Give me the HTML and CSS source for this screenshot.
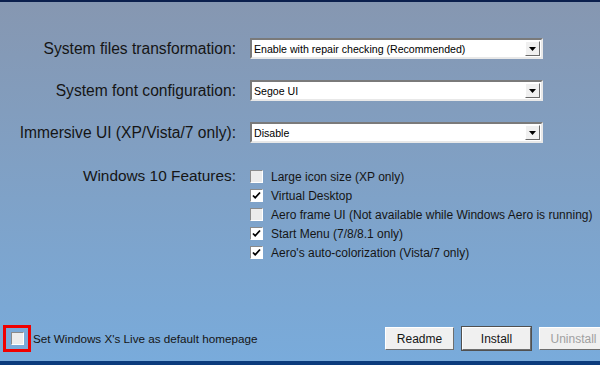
FILE: index.html
```html
<html>
    <head>
        <title>Setup options</title>
        <link rel="stylesheet" href="styles.css">
    </head>
    <body>
        <div class="page">
            <div class="options">
                <div class="row">
                    <span class="label">System files transformation:</span>
                    <div class="combo">
                        <span class="value">Enable with repair checking (Recommended)</span>
                        <span class="drop"><svg width="7" height="4" viewBox="0 0 7 4"><path d="M0 0H7L3.5 4Z" fill="#000"/></svg></span>
                    </div>
                </div>
                <div class="row">
                    <span class="label">System font configuration:</span>
                    <div class="combo">
                        <span class="value">Segoe UI</span>
                        <span class="drop"><svg width="7" height="4" viewBox="0 0 7 4"><path d="M0 0H7L3.5 4Z" fill="#000"/></svg></span>
                    </div>
                </div>
                <div class="row">
                    <span class="label">Immersive UI (XP/Vista/7 only):</span>
                    <div class="combo">
                        <span class="value">Disable</span>
                        <span class="drop"><svg width="7" height="4" viewBox="0 0 7 4"><path d="M0 0H7L3.5 4Z" fill="#000"/></svg></span>
                    </div>
                </div>
                <div class="row features">
                    <span class="label small">Windows 10 Features:</span>
                    <div class="checks">
                        <div class="check"><span class="box"></span>Large icon size (XP only)</div>
                        <div class="check"><span class="box on"><svg width="9" height="9" viewBox="0 0 9 9"><path d="M1 4.5L3.2 6.8L8 1.5" fill="none" stroke="#000" stroke-width="1.8"/></svg></span>Virtual Desktop</div>
                        <div class="check"><span class="box"></span>Aero frame UI (Not available while Windows Aero is running)</div>
                        <div class="check"><span class="box on"><svg width="9" height="9" viewBox="0 0 9 9"><path d="M1 4.5L3.2 6.8L8 1.5" fill="none" stroke="#000" stroke-width="1.8"/></svg></span>Start Menu (7/8/8.1 only)</div>
                        <div class="check"><span class="box on"><svg width="9" height="9" viewBox="0 0 9 9"><path d="M1 4.5L3.2 6.8L8 1.5" fill="none" stroke="#000" stroke-width="1.8"/></svg></span>Aero's auto-colorization (Vista/7 only)</div>
                    </div>
                </div>
            </div>
            <div class="footer">
                <div class="homepage">
                    <span class="focus"><span class="box"></span></span>
                    Set Windows X's Live as default homepage
                </div>
                <div class="buttons">
                    <span class="btn">Readme</span>
                    <span class="btn default">Install</span>
                    <span class="btn disabled">Uninstall</span>
                </div>
            </div>
        </div>
    </body>
</html>
```

FILE: styles.css
```css
body {
    margin: 0;
    width: 600px;
    height: 365px;
    overflow: hidden;
    font-family: 'Liberation Sans', Arial, sans-serif;
    color: #151515;
}
.page {
    height: 359px;
    border-top: 2px solid #0b1f4d;
    border-bottom: 4px solid #0b3b7c;
    background: linear-gradient(#8697b1, #79abdb);
    display: flex;
    flex-direction: column;
}
.options {
    padding-top: 36px;
    display: flex;
    flex-direction: column;
    gap: 21px;
}
.row {
    display: flex;
    align-items: center;
    gap: 14px;
}
.label {
    width: 236px;
    text-align: right;
    font-size: 15.6px;
    white-space: nowrap;
}
.label.small {
    font-size: 15.4px;
}
.combo {
    width: 289px;
    height: 17px;
    background: #fff;
    border: 2px solid;
    border-color: #7a7a7a #e8e8e8 #e8e8e8 #7a7a7a;
    display: flex;
    align-items: center;
    justify-content: space-between;
    font-size: 10.6px;
    color: #000;
}
.value {
    padding-left: 2px;
}
.drop {
    width: 13px;
    height: 13px;
    margin-right: 1px;
    background: #f0f0f0;
    border: 1px solid;
    border-color: #fff #6a6a6a #6a6a6a #fff;
    display: flex;
    align-items: center;
    justify-content: center;
}
.features {
    align-items: flex-start;
    margin-top: 2px;
}
.features .label {
    padding-top: 1px;
}
.checks {
    display: flex;
    flex-direction: column;
    gap: 4px;
    padding-top: 3px;
}
.check {
    display: flex;
    align-items: center;
    gap: 8px;
    font-size: 12px;
    height: 15px;
    white-space: nowrap;
}
.box {
    width: 11px;
    height: 11px;
    background: #ececec;
    border: 1px solid;
    border-color: #8a8a8a #fff #fff #8a8a8a;
    display: flex;
    align-items: center;
    justify-content: center;
}
.box.on {
    background: #fff;
}
.footer {
    margin-top: auto;
    padding: 0 0 9px 3px;
    display: flex;
    align-items: center;
    justify-content: space-between;
}
.homepage {
    display: flex;
    align-items: center;
    gap: 2px;
    font-size: 11.7px;
}
.focus {
    width: 22px;
    height: 21px;
    border: 3px solid #f00000;
    display: flex;
    align-items: center;
    justify-content: center;
}
.buttons {
    display: flex;
    gap: 8px;
    margin-right: -8px;
}
.btn {
    width: 67px;
    height: 21px;
    background: #f0f0f0;
    border: 1px solid;
    border-color: #fff #6e6e6e #6e6e6e #fff;
    display: flex;
    align-items: center;
    justify-content: center;
    font-size: 12px;
}
.btn.default {
    outline: 1px solid #505050;
    outline-offset: 0;
}
.btn.disabled {
    color: #a0a0a0;
}
```
